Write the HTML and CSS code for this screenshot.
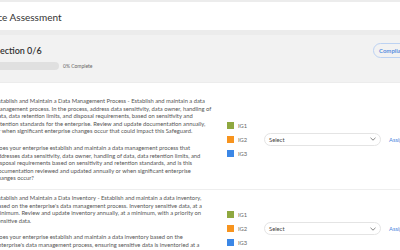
FILE: index.html
```html
<!DOCTYPE html>
<html lang="en">

<head>
    <meta charset="UTF-8">
    <title>Compliance Assessment</title>
    <link rel="stylesheet" href="styles.css">
</head>

<body>
    <div id="side">
        <header id="topbar">
            <h1>Compliance Assessment</h1>
        </header>

        <section id="sektion">
            <div class="status">
                <h2>Section 0/6</h2>
                <div class="fremskridt">
                    <div class="bar"><span></span></div>
                    <p>0% Complete</p>
                </div>
            </div>
            <button class="rapport">Compliance Report</button>
        </section>

        <section id="liste">
            <article class="punkt">
                <div class="tekst">
                    <p>Establish and Maintain a Data Management Process - Establish and maintain a data management process. In the process, address data sensitivity, data owner, handling of data, data retention limits, and disposal requirements, based on sensitivity and retention standards for the enterprise. Review and update documentation annually, or when significant enterprise changes occur that could impact this Safeguard.</p>
                    <p>Does your enterprise establish and maintain a data management process that addresses data sensitivity, data owner, handling of data, data retention limits, and disposal requirements based on sensitivity and retention standards, and is this documentation reviewed and updated annually or when significant enterprise changes occur?</p>
                </div>
                <ul class="ig">
                    <li><span class="firkant ig1"></span>IG1</li>
                    <li><span class="firkant ig2"></span>IG2</li>
                    <li><span class="firkant ig3"></span>IG3</li>
                </ul>
                <div class="vaelg">Select
                    <svg width="6" height="4" viewBox="0 0 6 4"><path d="M0.5 0.8 L3 3.2 L5.5 0.8" fill="none" stroke="#777" stroke-width="0.9"/></svg>
                </div>
                <a class="tildel" href="#">Assign</a>
            </article>

            <article class="punkt">
                <div class="tekst">
                    <p>Establish and Maintain a Data Inventory - Establish and maintain a data inventory, based on the enterprise's data management process. Inventory sensitive data, at a minimum. Review and update inventory annually, at a minimum, with a priority on sensitive data.</p>
                    <p>Does your enterprise establish and maintain a data inventory based on the enterprise's data management process, ensuring sensitive data is inventoried at a minimum, and that the inventory is reviewed and updated annually, with a priority on sensitive data?</p>
                </div>
                <ul class="ig">
                    <li><span class="firkant ig1"></span>IG1</li>
                    <li><span class="firkant ig2"></span>IG2</li>
                    <li><span class="firkant ig3"></span>IG3</li>
                </ul>
                <div class="vaelg">Select
                    <svg width="6" height="4" viewBox="0 0 6 4"><path d="M0.5 0.8 L3 3.2 L5.5 0.8" fill="none" stroke="#777" stroke-width="0.9"/></svg>
                </div>
                <a class="tildel" href="#">Assign</a>
            </article>
        </section>
    </div>
</body>

</html>
```
FILE: styles.css
```css
body {
    margin: 0;
    background-color: #ececec;
    font-family: Lato, "Liberation Sans", sans-serif;
    color: #555;
    overflow: hidden;
}

#side {
    width: 470px;
    margin-left: -5px;
    padding-top: 2px;
}

#topbar {
    background-color: white;
    height: 28px;
    display: flex;
    align-items: center;
    padding-top: 2px;
    box-sizing: border-box;
    margin-left: -39px;
}

h1 {
    margin: 0;
    font-size: 10px;
    font-weight: 400;
    color: #333;
}

#sektion {
    margin-top: 5px;
    background-color: #f2f2f2;
    height: 47px;
    display: flex;
    align-items: flex-start;
    justify-content: space-between;
    padding: 0 22px 0 0;
}

h2 {
    margin: 10px 0 0;
    font-size: 9px;
    font-weight: 600;
    color: #333;
}

.fremskridt {
    display: flex;
    align-items: center;
    gap: 4px;
    margin-top: 6px;
}

.bar {
    width: 64px;
    height: 8px;
    border-radius: 4px;
    background-color: #e0e0e0;
}

.fremskridt p {
    margin: 0;
    font-size: 5px;
    color: #666;
}

.rapport {
    margin-top: 8px;
    font-family: inherit;
    font-size: 6px;
    font-weight: 700;
    color: #5b8fe0;
    background: none;
    border: 1px solid #bcd2f2;
    border-radius: 8px;
    padding: 3px 5px;
    width: 70px;
    text-align: left;
}

#liste {
    background-color: white;
    margin-top: 1px;
    padding-top: 10px;
}

.punkt {
    display: grid;
    grid-template-columns: 232px 37px 117px auto;
    align-items: center;
    border-bottom: 1px solid #eee;
    padding: 4px 0 7px;
}

.tekst {
    font-size: 5.8px;
    line-height: 7.6px;
    width: 216.5px;
}

.tekst p {
    margin: 0 0 9px;
}

.tekst p:last-child {
    margin-bottom: 0;
}

.ig {
    list-style: none;
    margin: 0;
    padding: 0;
    font-size: 5.8px;
    color: #666;
}

.ig li {
    display: flex;
    align-items: center;
    gap: 4px;
    height: 7px;
    margin-bottom: 7px;
}

.ig li:last-child {
    margin-bottom: 0;
}

.firkant {
    width: 7px;
    height: 7px;
}

.ig1 {
    background-color: #8fa83f;
}

.ig2 {
    background-color: #f7941e;
}

.ig3 {
    background-color: #3b87e6;
}

.vaelg {
    height: 13px;
    border: 1px solid #e4e4e4;
    border-radius: 7px;
    font-size: 5.8px;
    color: #444;
    display: flex;
    align-items: center;
    justify-content: space-between;
    padding: 0 4px;
    box-sizing: border-box;
}

.tildel {
    margin-left: 8px;
    font-size: 5.8px;
    color: #4a86e0;
    text-decoration: none;
}
```
